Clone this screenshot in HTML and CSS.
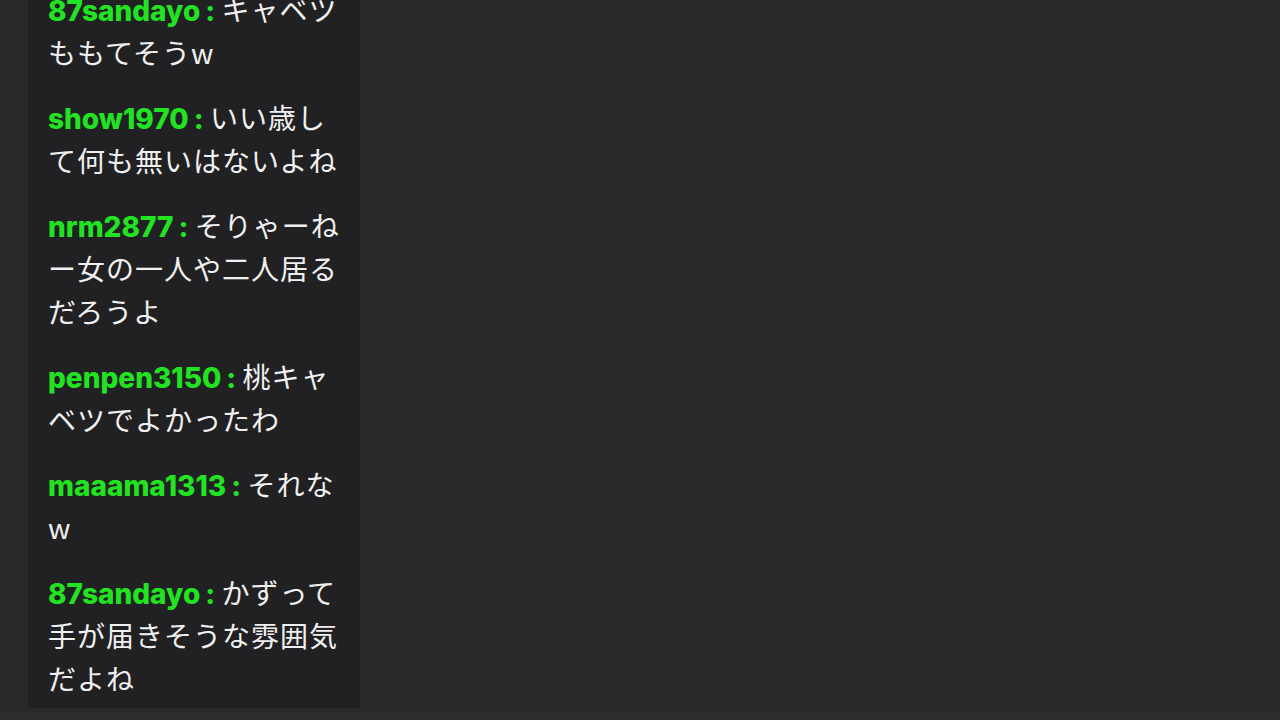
FILE: index.html
```html
<!DOCTYPE html>
<html lang="ja">
<head>
<meta charset="utf-8">
<link rel="stylesheet" href="styles.css">
</head>
<body>
<div class="screen">
  <div class="chat">
    <div class="msg"><span class="name">87sandayo</span><span class="colon">:</span> <span class="text">キャベツももてそうw</span></div>
    <div class="msg"><span class="name">show1970</span><span class="colon">:</span> <span class="text">いい歳して何も無いはないよね</span></div>
    <div class="msg"><span class="name">nrm2877</span><span class="colon">:</span> <span class="text">そりゃーねー女の一人や二人居るだろうよ</span></div>
    <div class="msg"><span class="name">penpen3150</span><span class="colon">:</span> <span class="text">桃キャベツでよかったわ</span></div>
    <div class="msg"><span class="name">maaama1313</span><span class="colon">:</span> <span class="text">それなw</span></div>
    <div class="msg"><span class="name">87sandayo</span><span class="colon">:</span> <span class="text">かずって手が届きそうな雰囲気だよね</span></div>
  </div>
  <div class="footer"></div>
</div>
</body>
</html>
```

FILE: styles.css
```css
html, body {
  margin: 0;
  padding: 0;
  background: #28282a;
  overflow: hidden;
}
.screen {
  width: 1280px;
  height: 720px;
  display: flex;
  flex-direction: column;
  overflow: hidden;
}
.chat {
  height: 708px;
  flex: none;
  width: 332px;
  margin-left: 28px;
  box-sizing: border-box;
  padding: 0 12px 8px 20px;
  background: #212123;
  display: flex;
  flex-direction: column;
  justify-content: flex-end;
  overflow: hidden;
}
.msg {
  font-family: "Noto Sans CJK JP", "Inter", sans-serif;
  font-size: 28px;
  line-height: 43px;
  color: #f0f0f0;
  padding: 11px 0;
  word-break: break-all;
  line-break: anywhere;
}
.msg:last-child {
  padding-bottom: 0;
}
.name, .colon {
  font-family: "Inter", "Liberation Sans", sans-serif;
  font-weight: 800;
  color: #22e322;
  line-height: 1;
}
.colon {
  margin-left: 5px;
}
.text {
  letter-spacing: 1px;
}
.footer {
  flex: 1;
  margin-top: 4px;
  background: #2d2d30;
}
```
